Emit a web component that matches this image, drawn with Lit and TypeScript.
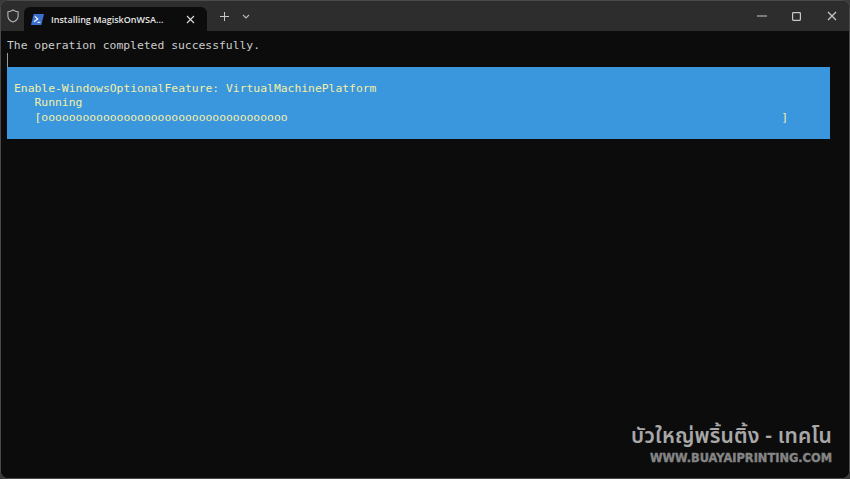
import { LitElement, html, css } from "lit";
import { customElement } from "lit/decorators.js";

@customElement("app-root")
export class AppRoot extends LitElement {
  static styles = css`
    :host { display: block; width: 850px; height: 479px; background: #3a3a3a; overflow: hidden; }
    .win { position: relative; width: 850px; height: 479px; box-sizing: border-box; background: #0c0c0c; border: 1px solid #4a4a4a; border-radius: 8px; overflow: hidden; display: flex; flex-direction: column; font-family: "Segoe UI", "Open Sans", "Noto Sans", sans-serif; }
    .bar { height: 30px; flex: none; background: #2e2d2e; display: flex; align-items: flex-end; color: #d8d8d8; }
    .shield { width: 23px; height: 30px; display: flex; align-items: center; justify-content: center; }
    .tab { width: 183px; height: 24px; background: #0c0c0c; border-radius: 6px 6px 0 0; display: flex; align-items: center; box-sizing: border-box; padding: 0 12px 0 7px; gap: 7px; }
    .tab .t { font-size: 9px; font-weight: 600; color: #e6e6e6; flex: 1; white-space: nowrap; }
    .actions { display: flex; align-items: center; height: 30px; gap: 13px; padding-left: 13px; }
    .spacer { flex: 1; }
    .caps { display: flex; align-items: center; height: 30px; }
    .cap { width: 35px; height: 30px; display: flex; align-items: center; justify-content: center; }
    .term { flex: 1; background: #0c0c0c; padding: 7px 0 0 6px; font-family: "DejaVu Sans Mono", monospace; font-size: 11.36px; line-height: 14.6px; color: #cccccc; }
    .line { white-space: pre; }
    .cursor { width: 1px; height: 14px; background: #9a9a9a; }
    .progress { width: 823px; height: 72px; background: #3a96dd; color: #f3f0a6; box-sizing: border-box; padding: 14px 0 0 7px; }
    .row { display: flex; width: 774px; justify-content: space-between; white-space: pre; }
    .mark { position: absolute; right: 17px; bottom: 13px; display: flex; flex-direction: column; align-items: flex-end; gap: 3px; }
    .th { font-family: "Noto Sans Thai", "Noto Sans", "DejaVu Sans", sans-serif; font-size: 21px; line-height: 24px; font-weight: 600; color: #a8a8a8; letter-spacing: 0.15px; white-space: nowrap; }
    .url { font-family: "DejaVu Sans", sans-serif; font-size: 11.4px; line-height: 13px; font-weight: 700; color: #858585; -webkit-text-stroke: 0.4px #858585; white-space: nowrap; }
  `;
  render() {
    return html`<div class="win">
      <div class="bar">
        <div class="shield"><svg width="12" height="14" viewBox="0 0 12 14" fill="none" stroke="#b5b5b5" stroke-width="1.1"><path d="M6 1C4.5 2 3 2.6.9 2.7V7c0 3 2 5 5.1 6 3.1-1 5.1-3 5.1-6V2.7C9 2.6 7.5 2 6 1z"/></svg></div>
        <div class="tab">
          <svg width="13" height="11" viewBox="0 0 13 11"><path d="M2.6 0H13L10.4 11H0z" fill="#3b6fd0"/><path d="M3.8 2.4 6.8 5 3 7.8" fill="none" stroke="#fff" stroke-width="1.1"/><path d="M6.4 8.3h3" stroke="#fff" stroke-width="1"/></svg>
          <span class="t">Installing MagiskOnWSA...</span>
          <svg width="9" height="9" viewBox="0 0 9 9" stroke="#dcdcdc" stroke-width="1.1"><path d="M1 1l7 7M8 1L1 8"/></svg>
        </div>
        <div class="actions">
          <svg width="9" height="9" viewBox="0 0 9 9" stroke="#c8c8c8" stroke-width="1"><path d="M4.5 0v9M0 4.5h9"/></svg>
          <svg width="8" height="5" viewBox="0 0 8 5" fill="none" stroke="#b8b8b8" stroke-width="1.1"><path d="M1 1l3 3 3-3"/></svg>
        </div>
        <div class="spacer"></div>
        <div class="caps">
          <div class="cap"><svg width="10" height="2" viewBox="0 0 10 2" stroke="#c8c8c8"><path d="M0 1h10"/></svg></div>
          <div class="cap"><svg width="9" height="9" viewBox="0 0 9 9" fill="none" stroke="#c8c8c8" stroke-width="1.2"><rect x=".6" y=".6" width="7.8" height="7.8" rx=".8"/></svg></div>
          <div class="cap"><svg width="10" height="10" viewBox="0 0 10 10" stroke="#c8c8c8" stroke-width="1.2"><path d="M1 1l8 8M9 1l-8 8"/></svg></div>
        </div>
      </div>
      <div class="term">
        <div class="line">The operation completed successfully.</div>
        <div class="cursor"></div>
        <div class="progress">
          <div class="line">Enable-WindowsOptionalFeature: VirtualMachinePlatform</div>
          <div class="line">   Running</div>
          <div class="row"><span>   [${"o".repeat(36)}</span><span>]</span></div>
        </div>
      </div>
      <div class="mark">
        <div class="th">บัวใหญ่พริ้นติ้ง - เทคโน</div>
        <div class="url">WWW.BUAYAIPRINTING.COM</div>
      </div>
    </div>`;
  }
}
